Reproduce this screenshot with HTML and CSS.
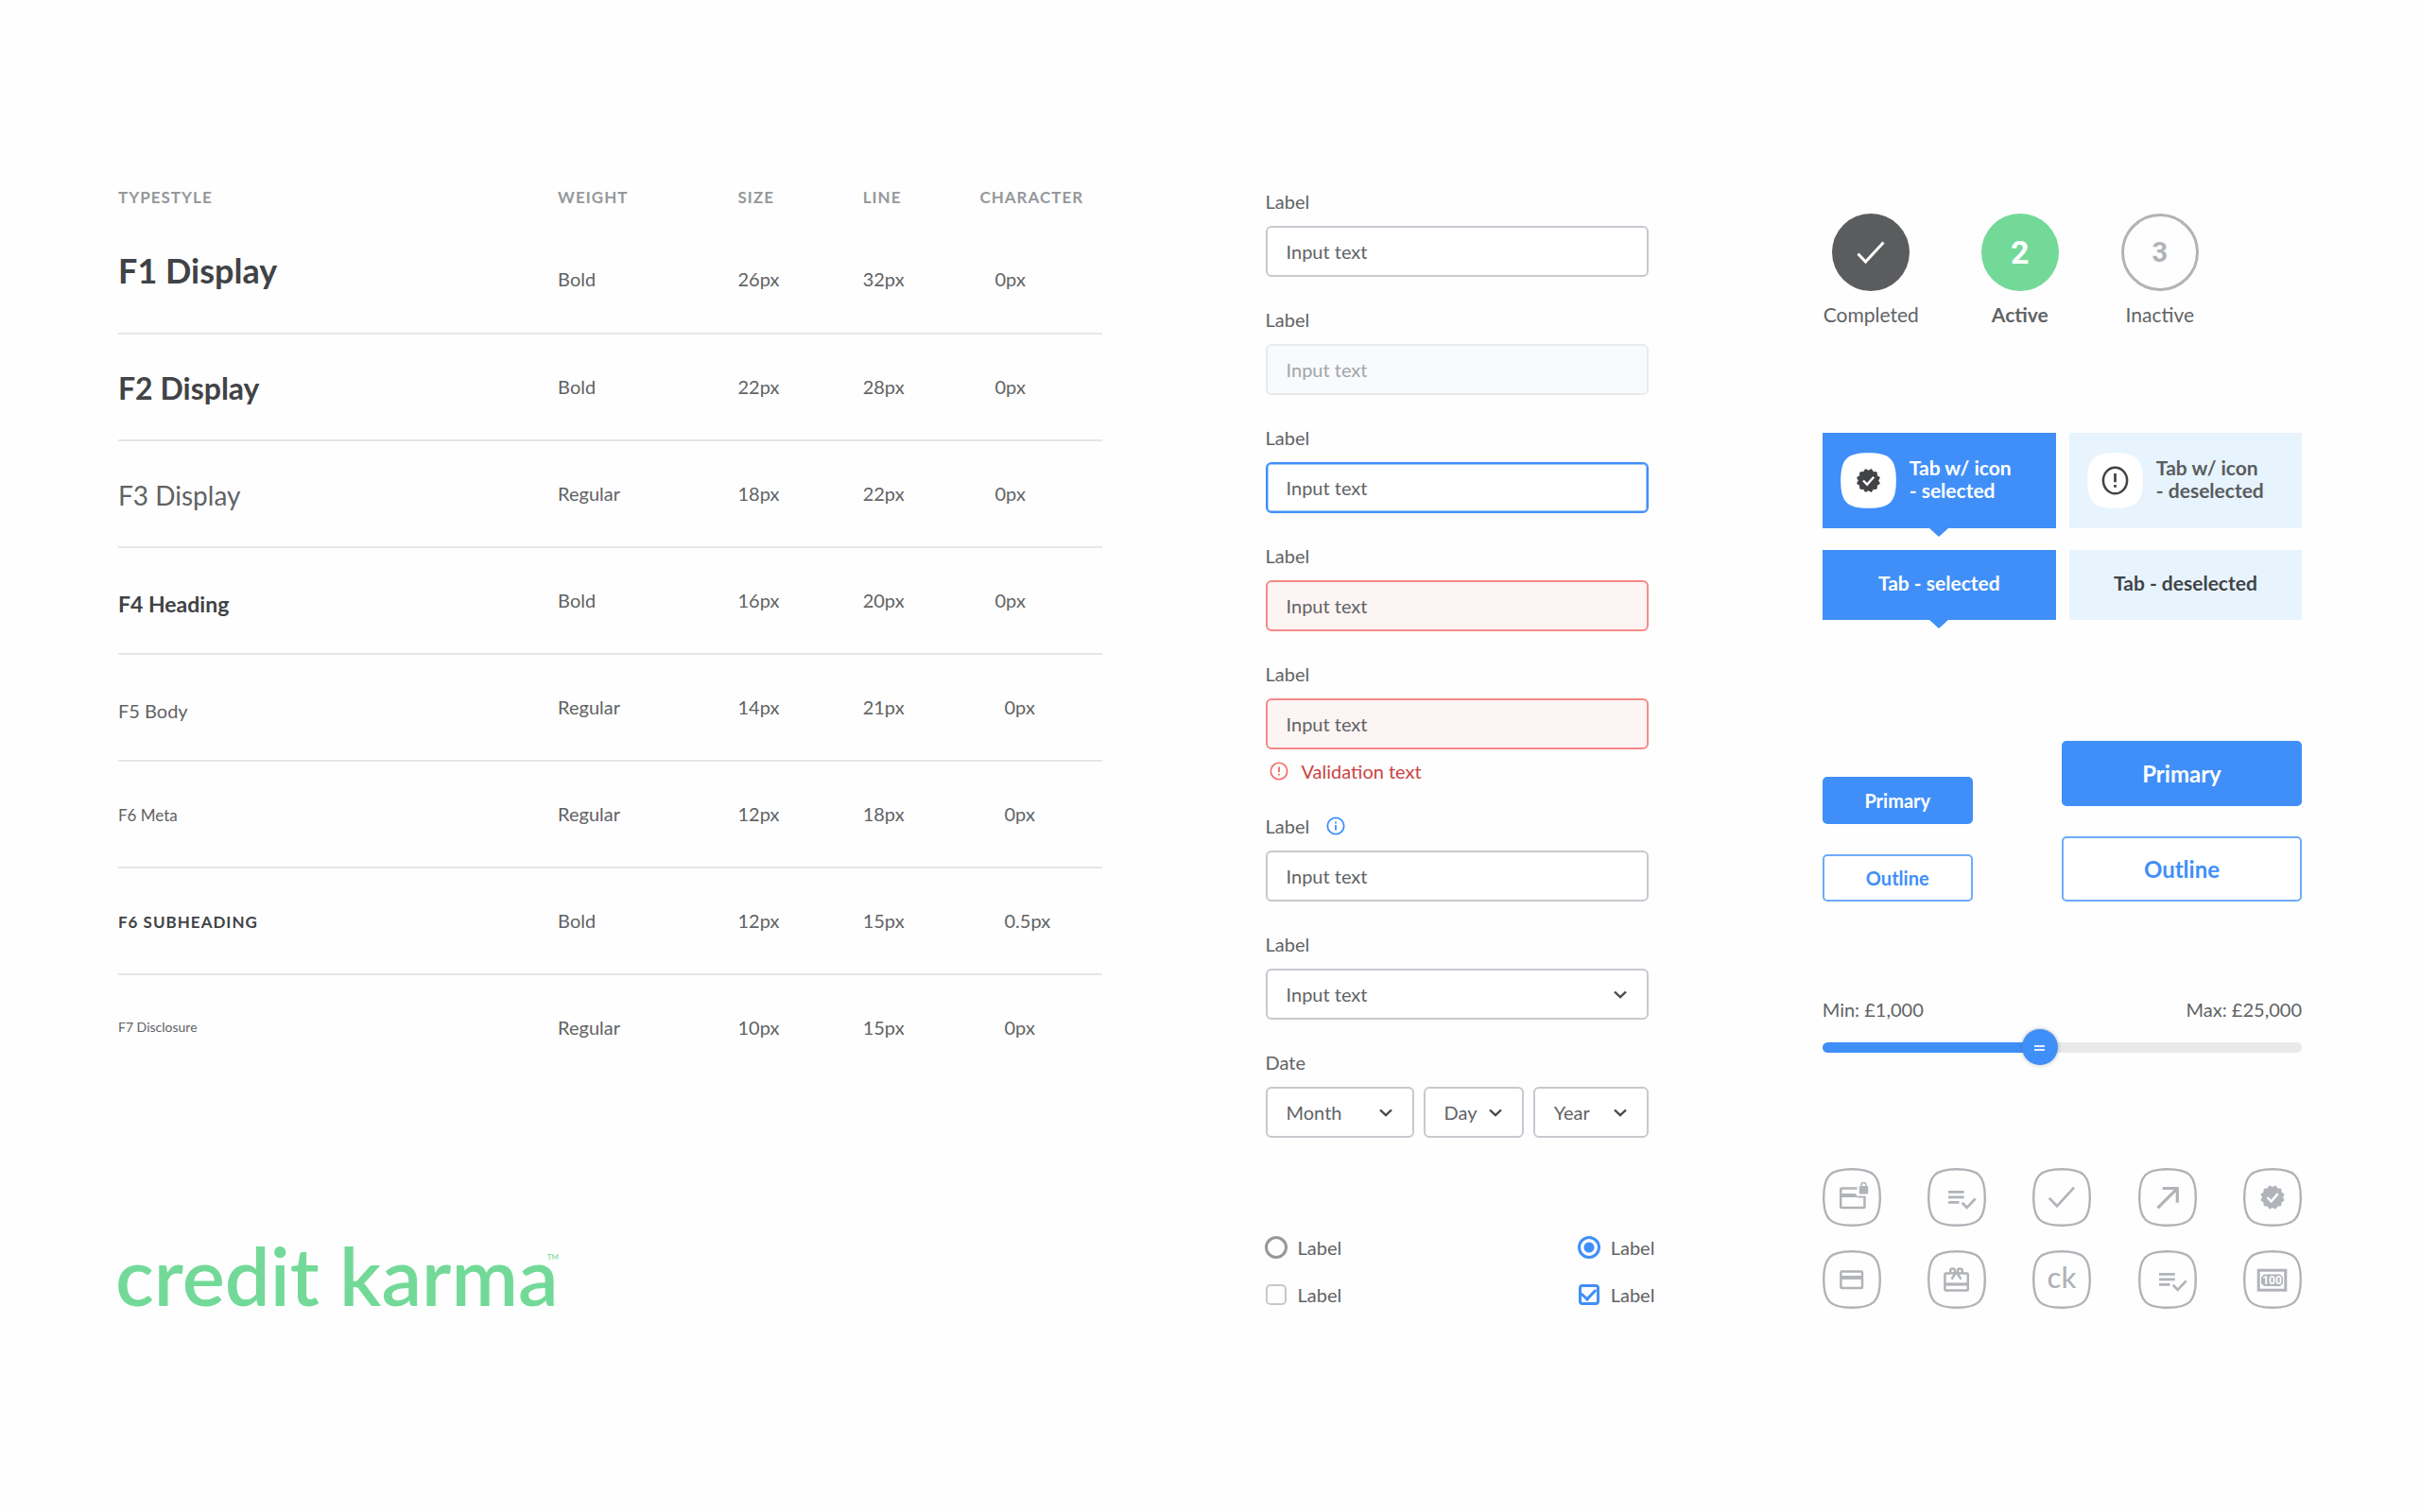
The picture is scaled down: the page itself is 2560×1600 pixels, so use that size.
FILE: index.html
```html
<!DOCTYPE html>
<html lang="en">
<head>
<meta charset="utf-8">
<title>Credit Karma UI styles</title>
<link rel="stylesheet" href="styles.css">
</head>
<body>
<svg class="defs" aria-hidden="true">
  <symbol id="tile" viewBox="0 0 62 62"><path d="M31 1.200C54 1.200 60.800 8 60.800 31S54 60.800 31 60.800S1.200 54 1.200 31S8 1.200 31 1.200Z"/></symbol>
  <symbol id="badge" viewBox="0 0 62 62">
    <polygon transform="translate(31 31)" fill="currentColor" stroke="currentColor" stroke-width="1" stroke-linejoin="round" points="10.5,0 12.1,3.2 9.1,5.2 8.8,8.8 5.2,9.1 3.2,12.1 0,10.5 -3.2,12.1 -5.2,9.1 -8.8,8.8 -9.1,5.2 -12.1,3.2 -10.5,0 -12.1,-3.2 -9.1,-5.2 -8.8,-8.8 -5.2,-9.1 -3.2,-12.1 0,-10.5 3.2,-12.1 5.2,-9.1 8.8,-8.8 9.1,-5.2 12.1,-3.2"/>
    <path d="M25.4 31l4.2 4.3 7.2-8.2" fill="none" stroke="#fff" stroke-width="2.4"/>
  </symbol>
  <symbol id="list-check" viewBox="0 0 62 62">
    <path d="M22 25.4h16.7M22 30.8h16.7M22 36.3h11.4M36.7 36.7l5 5.2 9-9.5" fill="none" stroke="currentColor" stroke-width="2.7"/>
  </symbol>
  <symbol id="chevron" viewBox="0 0 14 9"><path d="M1 1.5l6 5.7 6-5.7" fill="none" stroke="currentColor" stroke-width="2.4"/></symbol>
</svg>

<main class="board">
  <section class="type">
    <table class="type-table">
      <colgroup><col class="c-name"><col class="c-weight"><col class="c-size"><col class="c-line"><col class="c-char"></colgroup>
      <thead>
        <tr><th scope="col">TYPESTYLE</th><th scope="col">WEIGHT</th><th scope="col">SIZE</th><th scope="col">LINE</th><th scope="col">CHARACTER</th></tr>
      </thead>
      <tbody>
        <tr><td class="f1">F1 Display</td><td>Bold</td><td>26px</td><td>32px</td><td>0px</td></tr>
        <tr><td class="f2">F2 Display</td><td>Bold</td><td>22px</td><td>28px</td><td>0px</td></tr>
        <tr><td class="f3">F3 Display</td><td>Regular</td><td>18px</td><td>22px</td><td>0px</td></tr>
        <tr><td class="f4">F4 Heading</td><td>Bold</td><td>16px</td><td>20px</td><td>0px</td></tr>
        <tr class="small"><td class="f5">F5 Body</td><td>Regular</td><td>14px</td><td>21px</td><td>0px</td></tr>
        <tr class="small"><td class="f6">F6 Meta</td><td>Regular</td><td>12px</td><td>18px</td><td>0px</td></tr>
        <tr class="small"><td class="f6-sub">F6 SUBHEADING</td><td>Bold</td><td>12px</td><td>15px</td><td>0.5px</td></tr>
        <tr class="small"><td class="f7">F7 Disclosure</td><td>Regular</td><td>10px</td><td>15px</td><td>0px</td></tr>
      </tbody>
    </table>
    <div class="logo">credit karma<span class="tm">TM</span></div>
  </section>

  <form class="form">
    <div class="field"><label for="i1">Label</label><input class="box" id="i1" type="text" value="Input text"></div>
    <div class="field"><label for="i2">Label</label><input class="box" id="i2" type="text" value="Input text" disabled></div>
    <div class="field"><label for="i3">Label</label><input class="box is-focus" id="i3" type="text" value="Input text"></div>
    <div class="field"><label for="i4">Label</label><input class="box is-error" id="i4" type="text" value="Input text" aria-invalid="true"></div>
    <div class="field">
      <label for="i5">Label</label><input class="box is-error" id="i5" type="text" value="Input text" aria-invalid="true" aria-describedby="v5">
      <p class="validation" id="v5">
        <svg width="20" height="20" viewBox="0 0 20 20"><circle cx="10" cy="10" r="8.7" fill="none" stroke="currentColor" stroke-width="1.6"/><path d="M10 5.5v5.6M10 12.8v1.8" stroke="currentColor" stroke-width="1.8"/></svg>
        <span>Validation text</span>
      </p>
    </div>
    <div class="field">
      <div class="label-row"><label for="i6">Label</label>
        <svg class="info" width="20" height="20" viewBox="0 0 20 20"><circle cx="10" cy="10" r="8.7" fill="none" stroke="currentColor" stroke-width="1.8"/><path d="M10 9v5.6M10 5.6v1.8" stroke="currentColor" stroke-width="1.8"/></svg>
      </div>
      <input class="box" id="i6" type="text" value="Input text">
    </div>
    <div class="field"><label for="s1">Label</label>
      <span class="select"><select class="box" id="s1"><option>Input text</option></select><svg class="chev"><use href="#chevron"/></svg></span>
    </div>
    <div class="field"><label for="month">Date</label>
      <div class="date">
        <span class="select"><select class="box" id="month"><option>Month</option></select><svg class="chev"><use href="#chevron"/></svg></span>
        <span class="select"><select class="box" aria-label="Day"><option>Day</option></select><svg class="chev"><use href="#chevron"/></svg></span>
        <span class="select"><select class="box" aria-label="Year"><option>Year</option></select><svg class="chev"><use href="#chevron"/></svg></span>
      </div>
    </div>
    <div class="choices">
      <label class="choice"><input type="radio" name="r">Label</label>
      <label class="choice"><input type="radio" name="r" checked>Label</label>
      <label class="choice"><input type="checkbox">Label</label>
      <label class="choice"><input type="checkbox" checked>Label</label>
    </div>
  </form>

  <section class="kit">
    <ol class="steps">
      <li><span class="dot done"><svg width="30" height="26" viewBox="0 0 30 26"><path d="M1.5 14.5l8 8.5L28.5 2.5" fill="none" stroke="#fff" stroke-width="3"/></svg></span>Completed</li>
      <li class="current"><span class="dot active">2</span><b>Active</b></li>
      <li><span class="dot inactive">3</span>Inactive</li>
    </ol>

    <div class="tabs">
      <button type="button" class="tab with-icon selected">
        <svg class="tab-icon" viewBox="0 0 62 62"><use href="#tile" fill="#fff"/><use href="#badge"/></svg>
        <span class="tab-text">Tab w/ icon<br>- selected</span>
      </button>
      <button type="button" class="tab with-icon">
        <svg class="tab-icon" viewBox="0 0 62 62"><use href="#tile" fill="#fff"/><ellipse cx="31" cy="31" rx="12.8" ry="14" fill="none" stroke="currentColor" stroke-width="2.6"/><path d="M31 23.3v9.4M31 35.5v2.9" stroke="currentColor" stroke-width="2.8"/></svg>
        <span class="tab-text soft">Tab w/ icon<br>- deselected</span>
      </button>
      <button type="button" class="tab plain selected">Tab - selected</button>
      <button type="button" class="tab plain">Tab - deselected</button>
    </div>

    <div class="buttons">
      <div class="stack">
        <button type="button" class="btn primary">Primary</button>
        <button type="button" class="btn outline">Outline</button>
      </div>
      <div class="stack large">
        <button type="button" class="btn primary">Primary</button>
        <button type="button" class="btn outline">Outline</button>
      </div>
    </div>

    <div class="slider">
      <div class="slider-labels"><label for="amount">Min: £1,000</label><span>Max: £25,000</span></div>
      <input type="range" id="amount" min="1000" max="25000" step="100" value="11800">
    </div>

    <div class="icons">
      <svg viewBox="0 0 62 62"><use href="#tile"/><path d="M36.5 21.5H20.2q-1 0-1 1V41q0 1 1 1H43.500q1 0 1-1V31" fill="none" stroke="currentColor" stroke-width="2.500"/><path d="M19 27h15.500l3.500 4H19z" fill="currentColor"/><path d="M37.500 30.600h8" stroke="currentColor" stroke-width="2"/><rect x="38.800" y="19" width="9.400" height="8.500" rx="1" fill="currentColor"/><path d="M40.900 20v-1.800a2.600 2.600 0 0 1 5.200 0V20" fill="none" stroke="currentColor" stroke-width="1.500"/></svg>
      <svg viewBox="0 0 62 62"><use href="#tile"/><use href="#list-check"/></svg>
      <svg viewBox="0 0 62 62"><use href="#tile"/><path d="M17.700 31.700L26 40.300 44 20.700" fill="none" stroke="currentColor" stroke-width="2.700"/></svg>
      <svg viewBox="0 0 62 62"><use href="#tile"/><path d="M20.500 42.300L41 21.800M25.700 21.500H41.300V36.700" fill="none" stroke="currentColor" stroke-width="3.200"/></svg>
      <svg viewBox="0 0 62 62"><use href="#tile"/><use href="#badge"/></svg>
      <svg viewBox="0 0 62 62"><use href="#tile"/><rect x="19.400" y="22.400" width="22.600" height="17.600" rx="1" fill="none" stroke="currentColor" stroke-width="2.500"/><path d="M19 28.900h23" stroke="currentColor" stroke-width="4"/></svg>
      <svg viewBox="0 0 62 62"><use href="#tile"/><g fill="none" stroke="currentColor" stroke-width="2.500"><path d="M24 24.600h-4.600q-1 0-1 1V41.500q0 1 1 1h22.400q1 0 1-1V25.600q0-1-1-1H37M27.500 24.600h6"/><path d="M18.400 36h24.400" stroke-width="3.200"/><circle cx="26.600" cy="21.900" r="2.500"/><circle cx="34.400" cy="21.900" r="2.500"/><path d="M30.500 23l-5 7.600M30.500 23l5 7.600"/></g></svg>
      <svg viewBox="0 0 62 62"><use href="#tile"/><text class="ck" x="31" y="40" text-anchor="middle">ck</text></svg>
      <svg viewBox="0 0 62 62"><use href="#tile"/><use href="#list-check"/></svg>
      <svg viewBox="0 0 62 62"><use href="#tile"/><rect x="16.200" y="21.200" width="28.600" height="21" fill="none" stroke="currentColor" stroke-width="3"/><path d="M22 25.500h17l3 3v6.500l-3 3H22l-3-3v-6.500z" fill="currentColor"/><text class="note" x="30.500" y="36" text-anchor="middle">100</text></svg>
    </div>
  </section>
</main>
</body>
</html>
```

FILE: styles.css
```css
:root {
  --text: #616365;
  --dark: #414346;
  --blue: #408ff8;
  --green: #73d998;
  --grey: #b0b3b7;
  --line: #c6c9ce;
}

* { box-sizing: border-box; }

body {
  margin: 0;
  background: #fefefe;
  color: var(--text);
  font: 20px/24px Lato, "Liberation Sans", sans-serif;
}

button, input, select { font: inherit; color: inherit; margin: 0; }

.defs { display: none; }

.board {
  display: grid;
  grid-template-columns: 1040fr 405fr 518fr;
  column-gap: 173px;
  padding: 197px 125px;
}

/* Type scale */
.type-table {
  width: 100%;
  table-layout: fixed;
  border-collapse: separate;
  border-spacing: 0;
}
.c-name { width: 44.7%; }
.c-weight { width: 18.3%; }
.c-size { width: 12.7%; }
.c-line { width: 11.9%; }

.type-table th {
  height: 43px;
  padding: 0;
  vertical-align: top;
  text-align: left;
  font-size: 17px;
  letter-spacing: 1px;
  color: #95989c;
}
.type-table td {
  height: 113px;
  padding: 43px 0 0;
  vertical-align: top;
  border-bottom: 2px solid #e4e6e9;
}
.type-table tr:first-child td { height: 114px; }
.type-table tr:last-child td { border-bottom: 0; }
.type-table td:last-child { padding-left: 16px; }
.type-table .small td:last-child { padding-left: 26px; }
.type-table td:first-child { padding-top: 33px; line-height: 48px; }
.type-table td.f1 { font-size: 36px; font-weight: 700; color: var(--dark); padding-top: 22px; }
.f2 { font-size: 32px; font-weight: 700; color: var(--dark); }
.f3 { font-size: 28px; }
.type-table td.f4 { font-size: 23px; font-weight: 700; color: var(--dark); line-height: 52px; }
.type-table td.f5 { line-height: 52px; }
.f6 { font-size: 17px; }
.f6-sub { font-size: 17px; font-weight: 700; letter-spacing: 1px; color: var(--dark); }
.type-table td.f7 { font-size: 14px; line-height: 44px; }

.logo {
  margin: 161px 0 0 -3px;
  display: flex;
  color: var(--green);
  font-size: 85px;
  line-height: 86px;
  font-weight: 600;
}
.tm { margin-left: -12px; font-size: 8px; line-height: 48px; font-weight: 400; }

/* Form */
.form { padding-top: 4px; display: flex; flex-direction: column; gap: 33px; }
.field { display: flex; flex-direction: column; gap: 14px; }
.box {
  width: 100%;
  height: 54px;
  padding: 0 20px;
  border: 2px solid var(--line);
  border-radius: 6px;
  background: #fff;
  appearance: none;
  outline: none;
}
.box:disabled { background: #f9fafc; border-color: #e8eaed; color: #a2a5a9; opacity: 1; }
.is-focus { border-color: var(--blue); box-shadow: inset 0 0 0 1px #9dc6fc; }
.is-error { background: #fdf4f4; border-color: #f58a87; }
.validation {
  display: flex;
  align-items: center;
  gap: 14px;
  height: 26px;
  margin: -4px 0 0;
  padding-left: 4px;
  color: #cb4442;
}
.validation svg { color: #f26662; }
.label-row { display: flex; align-items: center; gap: 18px; }
.info { color: var(--blue); }
.select { display: grid; align-items: center; }
.select > * { grid-area: 1 / 1; }
.chev {
  width: 14px;
  height: 9px;
  margin-right: 23px;
  justify-self: end;
  color: #47494c;
  pointer-events: none;
}
.date { display: grid; grid-template-columns: 157fr 106fr 122fr; gap: 10px; }
.choices {
  margin-top: 71px;
  display: grid;
  grid-template-columns: minmax(0, 331fr) minmax(0, 74fr);
  row-gap: 26px;
}
.choice { display: flex; align-items: center; gap: 11px; white-space: nowrap; }
.choice input { appearance: none; flex: none; display: grid; place-items: center; margin-left: -1px; }
.choice input[type="radio"] {
  width: 24px;
  height: 24px;
  border: 3px solid #95989c;
  border-radius: 50%;
}
.choice input[type="radio"]:checked {
  border-color: var(--blue);
  background: radial-gradient(circle, var(--blue) 5px, transparent 6px);
}
.choice input[type="checkbox"] {
  width: 22px;
  height: 22px;
  margin: 0 1px 0 0;
  border: 2px solid var(--line);
  border-radius: 5px;
}
.choice input[type="checkbox"]:checked { border: 3px solid var(--blue); border-radius: 4px; }
.choice input[type="checkbox"]:checked::before {
  content: "";
  width: 12px;
  height: 7px;
  margin-top: -4px;
  border: solid var(--blue);
  border-width: 0 0 3px 3px;
  transform: rotate(-47deg);
}

/* Component kit */
.kit { padding: 29px 0 0 11px; }
.steps { display: flex; gap: 66px; margin: 0; padding: 0 0 0 1px; list-style: none; font-size: 21px; }
.steps li { display: flex; flex-direction: column; align-items: center; gap: 13px; }
.dot {
  width: 82px;
  height: 82px;
  border-radius: 50%;
  display: grid;
  place-items: center;
  font-family: Roboto, sans-serif;
  font-weight: 700;
}
.done { background: #5b5c5e; }
.active { background: var(--green); color: #fff; font-size: 34px; }
.inactive { border: 3px solid var(--grey); color: var(--grey); font-size: 29px; }

.tabs {
  margin-top: 113px;
  display: grid;
  grid-template-columns: 247fr 246fr;
  gap: 23px 14px;
}
.tab {
  position: relative;
  border: 0;
  padding: 0;
  background: #e7f4fe;
  color: var(--dark);
  font-size: 21px;
  font-weight: 700;
  text-align: left;
}
.with-icon { height: 101px; padding-left: 18px; display: flex; align-items: center; gap: 13px; }
.tab-text { padding-bottom: 4px; }
.plain { height: 74px; padding-bottom: 4px; text-align: center; }
.tab.selected { background: var(--blue); color: #fff; }
.tab.selected::after {
  content: "";
  position: absolute;
  top: 100%;
  left: 50%;
  margin-left: -10px;
  border: 10px solid transparent;
  border-top: 9px solid var(--blue);
  border-bottom: 0;
}
.tab-icon { width: 61px; height: 61px; color: var(--dark); }
.soft { color: #5b5c5e; }

.buttons { margin-top: 128px; display: flex; justify-content: space-between; align-items: flex-end; }
.stack { width: 159px; display: grid; gap: 32px; }
.stack.large { width: 254px; font-size: 24px; }
.btn { height: 50px; padding: 0; border: 2px solid var(--blue); border-radius: 5px; font-weight: 700; }
.large .btn { height: 69px; }
.primary { background: var(--blue); color: #fff; }
.outline { background: #fff; border-color: #6dabfa; color: var(--blue); }

.slider { margin-top: 102px; display: grid; gap: 9px; }
.slider-labels { display: flex; justify-content: space-between; }
.slider input {
  appearance: none;
  width: 100%;
  height: 38px;
  background: none;
}
.slider input::-webkit-slider-runnable-track {
  height: 11px;
  border-radius: 6px;
  background: linear-gradient(to right, var(--blue) 45%, #e7e9ea 45%);
}
.slider input::-webkit-slider-thumb {
  appearance: none;
  width: 38px;
  height: 38px;
  margin-top: -14px;
  border-radius: 50%;
  background:
    linear-gradient(#e3effe, #e3effe) 50% 17px / 11px 2px no-repeat,
    linear-gradient(#e3effe, #e3effe) 50% 21px / 11px 2px no-repeat,
    var(--blue);
  box-shadow: 0 0 4px rgba(60, 80, 110, 0.4);
}

.icons {
  margin-top: 109px;
  display: grid;
  grid-template-columns: repeat(5, 62px);
  justify-content: space-between;
  row-gap: 25px;
  color: var(--grey);
}
.icons svg { width: 62px; height: 62px; }
.icons use[href="#tile"] { fill: none; stroke: currentColor; stroke-width: 2.4; }
.ck { font-size: 31px; font-weight: 500; fill: currentColor; }
.note { font: 700 12px Roboto, sans-serif; fill: #fff; }
```
